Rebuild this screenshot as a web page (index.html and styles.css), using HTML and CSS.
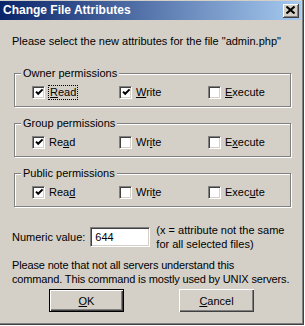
FILE: index.html
```html
<!DOCTYPE html>
<html lang="en">
<head>
    <meta charset="UTF-8">
    <meta name="viewport" content="width=device-width, initial-scale=1.0">
    <title>Change File Attributes</title>
    <link rel="stylesheet" href="styles.css">
</head>
<body>

    <div class="window">
        <!-- Caption bar -->
        <div class="titlebar">
            <span class="title">Change File Attributes</span>
            <span class="close-btn">
                <svg width="9" height="8" viewBox="0 0 9 8">
                    <path d="M0.5 0.5 L8.5 7.5 M8.5 0.5 L0.5 7.5" stroke="#000" stroke-width="2" fill="none"/>
                </svg>
            </span>
        </div>

        <div class="content">
            <p class="intro">Please select the new attributes for the file "admin.php"</p>

            <!-- Owner -->
            <div class="group">
                <span class="group-title">Owner permissions</span>
                <div class="checks">
                    <label class="check"><span class="box"><svg width="9" height="9" viewBox="0 0 9 9"><path d="M1 3.6 L3.2 5.8 L7.6 1.4" stroke="#000" stroke-width="2" fill="none"/></svg></span><span class="caption focused"><u>R</u>ead</span></label>
                    <label class="check"><span class="box"><svg width="9" height="9" viewBox="0 0 9 9"><path d="M1 3.6 L3.2 5.8 L7.6 1.4" stroke="#000" stroke-width="2" fill="none"/></svg></span><span class="caption"><u>W</u>rite</span></label>
                    <label class="check"><span class="box"></span><span class="caption"><u>E</u>xecute</span></label>
                </div>
            </div>

            <!-- Group -->
            <div class="group">
                <span class="group-title">Group permissions</span>
                <div class="checks">
                    <label class="check"><span class="box"><svg width="9" height="9" viewBox="0 0 9 9"><path d="M1 3.6 L3.2 5.8 L7.6 1.4" stroke="#000" stroke-width="2" fill="none"/></svg></span><span class="caption">Re<u>a</u>d</span></label>
                    <label class="check"><span class="box"></span><span class="caption">Wr<u>i</u>te</span></label>
                    <label class="check"><span class="box"></span><span class="caption">E<u>x</u>ecute</span></label>
                </div>
            </div>

            <!-- Public -->
            <div class="group">
                <span class="group-title">Public permissions</span>
                <div class="checks">
                    <label class="check"><span class="box"><svg width="9" height="9" viewBox="0 0 9 9"><path d="M1 3.6 L3.2 5.8 L7.6 1.4" stroke="#000" stroke-width="2" fill="none"/></svg></span><span class="caption">Rea<u>d</u></span></label>
                    <label class="check"><span class="box"></span><span class="caption">Wri<u>t</u>e</span></label>
                    <label class="check"><span class="box"></span><span class="caption">Exec<u>u</u>te</span></label>
                </div>
            </div>

            <div class="numeric">
                <span class="numeric-label">Numeric value:</span>
                <span class="edit">644</span>
                <span class="hint">(x = attribute not the same<br>for all selected files)</span>
            </div>

            <p class="note">Please note that not all servers understand this<br>command. This command is mostly used by UNIX servers.</p>

            <div class="buttons">
                <button class="btn default"><u>O</u>K</button>
                <button class="btn"><u>C</u>ancel</button>
            </div>
        </div>
    </div>

</body>
</html>
```

FILE: styles.css
```css
body {
    margin: 0;
    background-color: #ffffff;
    font-family: "Liberation Sans", Arial, sans-serif;
    font-size: 11px;
    line-height: 13px;
    color: #000000;
}

.window {
    width: 304px;
    height: 325px;
    box-sizing: border-box;
    padding-top: 1px;
    background-color: #d4d0c8;
    border-right: 1px solid #404040;
    border-bottom: 1px solid #404040;
    box-shadow: inset -1px -1px 0 #808080;
}

.titlebar {
    width: 301px;
    height: 19px;
    display: flex;
    align-items: center;
    justify-content: space-between;
    background: linear-gradient(to right, #0a246a, #a6caf0);
}

.title {
    margin-left: 3px;
    color: #ffffff;
    font-weight: bold;
    font-size: 12px;
}

.close-btn {
    width: 16px;
    height: 14px;
    margin-right: 2px;
    box-sizing: border-box;
    display: flex;
    align-items: center;
    justify-content: center;
    background-color: #d4d0c8;
    border-right: 1px solid #404040;
    border-bottom: 1px solid #404040;
    box-shadow: inset 1px 1px 0 #ffffff, inset -1px -1px 0 #808080;
}

.content {
    padding-left: 12px;
}

.intro {
    margin: 15px 0 0;
}

.group {
    position: relative;
    width: 277px;
    height: 34px;
    box-sizing: border-box;
    margin: 25px 0 0 2px;
    padding: 12px 0 0 17px;
    border: 1px solid #808080;
    box-shadow: inset 1px 1px 0 #ffffff, 1px 1px 0 #ffffff;
}

.group + .group {
    margin-top: 16px;
}

.group-title {
    position: absolute;
    top: -7px;
    left: 6px;
    padding: 0 2px;
    background-color: #d4d0c8;
}

.checks {
    display: grid;
    grid-template-columns: 87px 89px auto;
}

.check {
    display: flex;
    align-items: center;
    gap: 4px;
    height: 13px;
}

.box {
    width: 13px;
    height: 13px;
    box-sizing: border-box;
    padding: 2px;
    background-color: #ffffff;
    border-top: 1px solid #808080;
    border-left: 1px solid #808080;
    border-right: 1px solid #ffffff;
    border-bottom: 1px solid #ffffff;
    box-shadow: inset 1px 1px 0 #404040, inset -1px -1px 0 #d4d0c8;
}

.box svg {
    display: block;
    margin: -1px 0 0 0;
}

.caption.focused {
    outline: 1px dotted #000000;
    outline-offset: 0;
    padding: 0 1px;
}

.numeric {
    display: flex;
    align-items: center;
    margin-top: 16px;
}

.edit {
    width: 60px;
    height: 20px;
    box-sizing: border-box;
    margin-left: 5px;
    padding: 3px 0 0 4px;
    background-color: #ffffff;
    border-top: 1px solid #808080;
    border-left: 1px solid #808080;
    border-right: 1px solid #ffffff;
    border-bottom: 1px solid #ffffff;
    box-shadow: inset 1px 1px 0 #404040, inset -1px -1px 0 #d4d0c8;
}

.hint {
    margin-left: 6px;
    line-height: 14px;
}

.note {
    margin: 7px 0 0;
    line-height: 14px;
    letter-spacing: -0.15px;
}

.buttons {
    display: flex;
    gap: 55px;
    margin: 3px 0 0 37px;
}

.btn {
    width: 75px;
    height: 23px;
    padding: 0;
    font-family: inherit;
    font-size: 11px;
    color: #000000;
    background-color: #d4d0c8;
    border: none;
    border-radius: 0;
    box-shadow: inset 1px 1px 0 #ffffff, inset -1px -1px 0 #404040, inset -2px -2px 0 #808080;
}

.btn.default {
    box-shadow: inset 0 0 0 1px #000000, inset 2px 2px 0 #ffffff, inset -2px -2px 0 #404040, inset -3px -3px 0 #808080;
}
```
